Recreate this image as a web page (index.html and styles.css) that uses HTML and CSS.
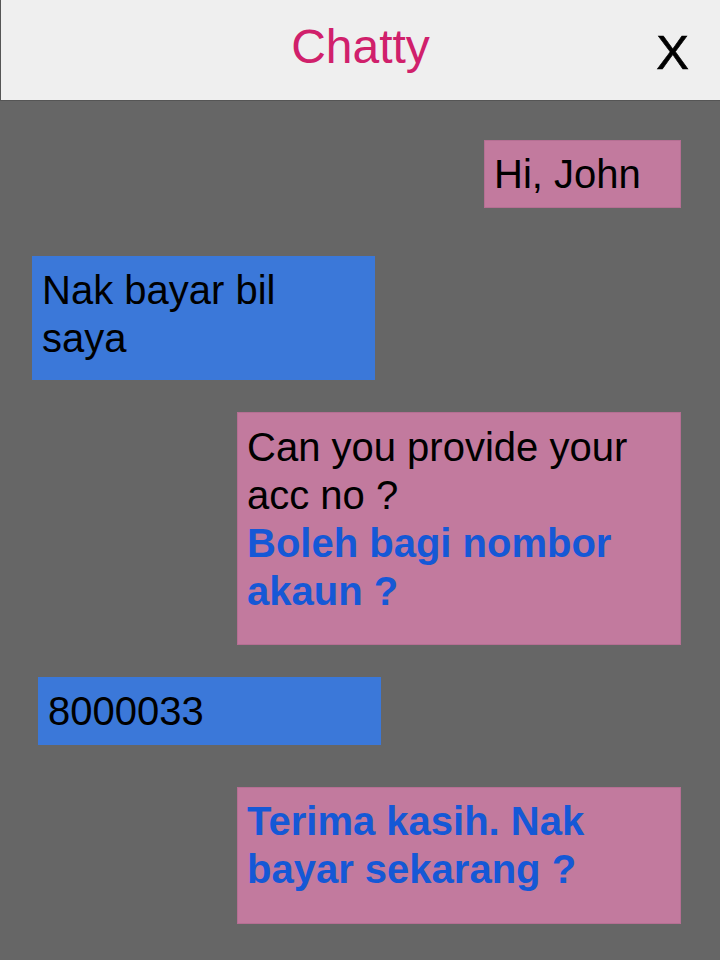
FILE: index.html
```html
<!DOCTYPE html>
<html lang="ms">
<head>
<meta charset="utf-8">
<title>Chatty</title>
<link rel="stylesheet" href="styles.css">
</head>
<body>
<div class="app">
  <header class="topbar">
    <span class="spacer"></span>
    <h1 class="title">Chatty</h1>
    <button class="close" type="button">X</button>
  </header>
  <main class="chat">
    <div class="bubble bot b-hi">Hi, John</div>
    <div class="bubble user b-bill">Nak bayar bil saya</div>
    <div class="bubble bot b-acc">Can you provide your acc no ?<br><strong class="malay">Boleh bagi nombor akaun ?</strong></div>
    <div class="bubble user b-num">8000033</div>
    <div class="bubble bot b-thanks"><strong class="malay">Terima kasih. Nak bayar sekarang ?</strong></div>
  </main>
</div>
</body>
</html>
```

FILE: styles.css
```css
* { box-sizing: border-box; }

html, body {
  margin: 0;
  padding: 0;
  background: #666666;
  font-family: "Liberation Sans", Arial, sans-serif;
}

.app {
  width: 720px;
  min-height: 960px;
  background: #666666;
}

.topbar {
  height: 101px;
  background: #efefef;
  border-left: 1px solid #555555;
  border-bottom: 1px solid #555555;
  display: grid;
  grid-template-columns: 1fr auto 1fr;
  align-items: start;
}

.title {
  margin: 0;
  padding-top: 19px;
  font-size: 48px;
  font-weight: normal;
  line-height: 55px;
  color: #d0206b;
}

.close {
  justify-self: end;
  margin: 0;
  margin-right: 31px;
  padding: 0;
  padding-top: 25px;
  border: 0;
  background: transparent;
  font-family: "Liberation Sans", Arial, sans-serif;
  font-size: 49px;
  line-height: 55px;
  color: #000000;
  -webkit-text-stroke: 0.6px #000000;
}

.chat {
  display: flex;
  flex-direction: column;
  padding: 39px 0 0 0;
}

.bubble {
  font-size: 40px;
  line-height: 48px;
  color: #000000;
  padding: 10px 10px 9px 10px;
}

.bot {
  align-self: flex-end;
  margin-right: 39px;
  background: #c27a9e;
  border: 1px solid #b56f93;
  padding-left: 9px;
}

.user {
  align-self: flex-start;
  background: #3b78d9;
}

.malay {
  color: #1558d6;
  font-weight: bold;
}

.b-hi {
  width: 197px;
  padding-top: 9px;
  padding-bottom: 9px;
}

.b-bill {
  width: 343px;
  margin-left: 32px;
  margin-top: 48px;
  padding-right: 40px;
  padding-bottom: 18px;
}

.b-acc {
  width: 444px;
  margin-top: 32px;
  padding-top: 10px;
  padding-bottom: 29px;
}

.b-num {
  width: 343px;
  margin-left: 38px;
  margin-top: 32px;
  padding-top: 10px;
  padding-bottom: 10px;
}

.b-thanks {
  width: 444px;
  margin-top: 42px;
  padding-top: 9px;
  padding-bottom: 30px;
}
```
